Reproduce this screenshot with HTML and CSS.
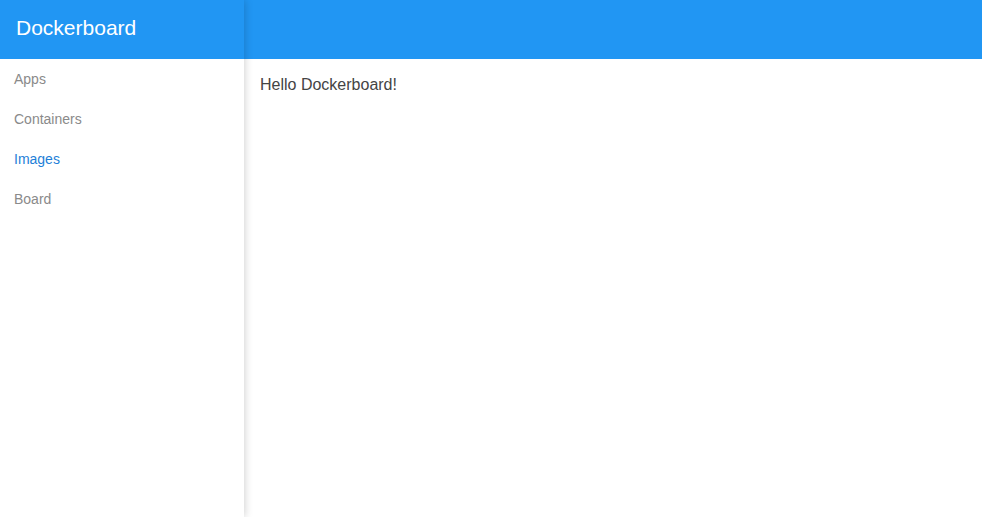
FILE: index.html
```html
<!DOCTYPE html>
<html>
<head>
<meta charset="utf-8">
<title>Dockerboard</title>
<link rel="stylesheet" href="styles.css">
</head>
<body>
<div class="app">
  <aside class="sidebar">
    <div class="brand">Dockerboard</div>
    <nav class="nav">
      <a class="nav-item">Apps</a>
      <a class="nav-item">Containers</a>
      <a class="nav-item active">Images</a>
      <a class="nav-item">Board</a>
    </nav>
  </aside>
  <div class="main">
    <header class="toolbar"></header>
    <div class="content">Hello Dockerboard!</div>
  </div>
</div>
</body>
</html>
```

FILE: styles.css
```css
html, body {
  margin: 0;
  padding: 0;
  height: 100%;
  background: #fff;
  font-family: "Liberation Sans", Arial, sans-serif;
}
.app {
  display: flex;
  height: 100%;
}
.sidebar {
  width: 244px;
  flex: 0 0 244px;
  background: #fff;
  position: relative;
  z-index: 2;
  box-shadow: 1px 0 8px rgba(0, 0, 0, 0.18);
  display: flex;
  flex-direction: column;
}
.brand {
  height: 59px;
  background: #2196f3;
  color: #fff;
  font-size: 21px;
  line-height: 56px;
  padding-left: 16px;
  box-sizing: border-box;
}
.nav {
  display: flex;
  flex-direction: column;
}
.nav-item {
  display: block;
  height: 40px;
  line-height: 40px;
  padding-left: 14px;
  font-size: 14px;
  color: #8a8a8a;
  text-decoration: none;
}
.nav-item.active {
  color: #1e7fd8;
}
.main {
  flex: 1;
  display: flex;
  flex-direction: column;
}
.toolbar {
  height: 59px;
  background: #2196f3;
}
.content {
  padding: 17px 16px;
  font-size: 16px;
  line-height: 18px;
  color: #444;
}
```
